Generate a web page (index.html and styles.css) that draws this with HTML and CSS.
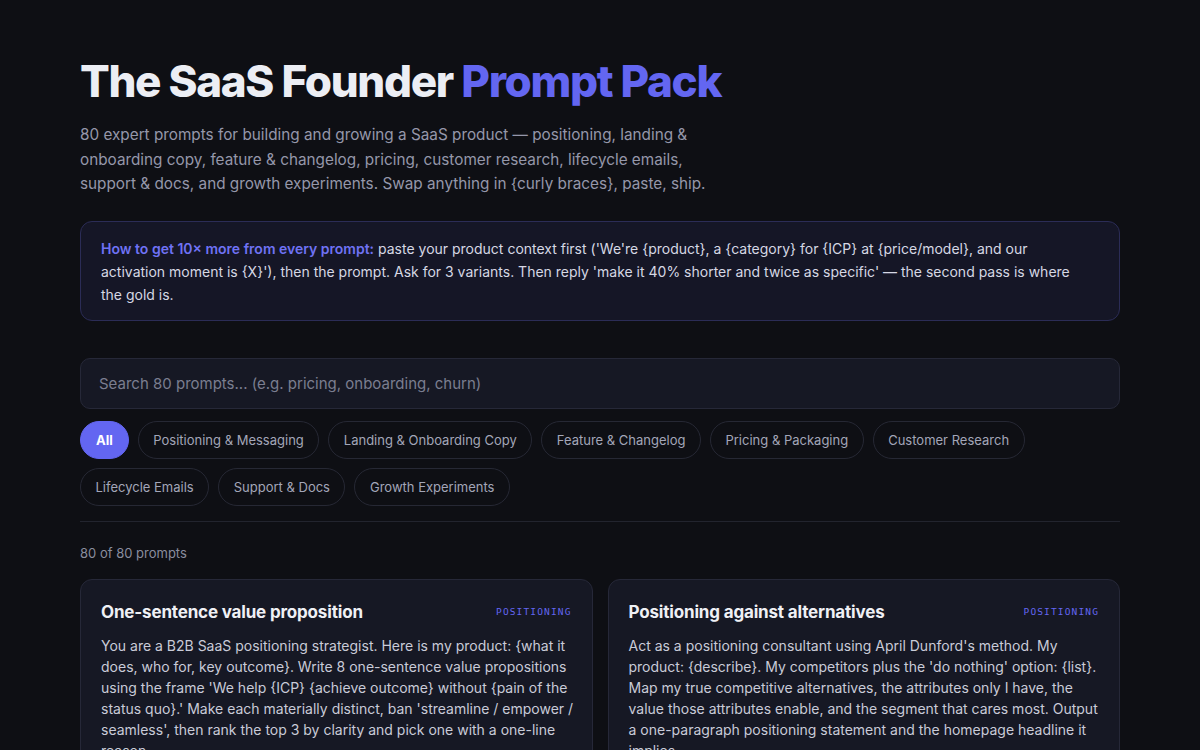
FILE: index.html
```html
<!DOCTYPE html>
<html lang="en">
<head>
  <meta charset="UTF-8">
  <meta name="viewport" content="width=device-width, initial-scale=1.0">
  <title>The SaaS Founder Prompt Pack</title>
  <link rel="stylesheet" href="styles.css">
</head>
<body>
  <main class="page">
    <header class="hero">
      <h1 class="hero-title">The SaaS Founder <span class="accent">Prompt Pack</span></h1>
      <p class="hero-sub">80 expert prompts for building and growing a SaaS product — positioning, landing &amp; onboarding copy, feature &amp; changelog, pricing, customer research, lifecycle emails, support &amp; docs, and growth experiments. Swap anything in {curly braces}, paste, ship.</p>
    </header>

    <div class="tip">
      <strong>How to get 10× more from every prompt:</strong> paste your product context first ('We're {product}, a {category} for {ICP} at {price/model}, and our activation moment is {X}'), then the prompt. Ask for 3 variants. Then reply 'make it 40% shorter and twice as specific' — the second pass is where the gold is.
    </div>

    <input type="text" class="search" id="search" placeholder="Search 80 prompts... (e.g. pricing, onboarding, churn)">

    <div class="filters" id="filters">
      <button class="chip active">All</button>
      <button class="chip">Positioning &amp; Messaging</button>
      <button class="chip">Landing &amp; Onboarding Copy</button>
      <button class="chip">Feature &amp; Changelog</button>
      <button class="chip">Pricing &amp; Packaging</button>
      <button class="chip">Customer Research</button>
      <button class="chip">Lifecycle Emails</button>
      <button class="chip">Support &amp; Docs</button>
      <button class="chip">Growth Experiments</button>
    </div>

    <div class="count" id="count">80 of 80 prompts</div>

    <section class="grid" id="grid">
      <article class="card">
        <div class="card-head">
          <h2 class="card-title">One-sentence value proposition</h2>
          <span class="card-tag">Positioning</span>
        </div>
        <p class="card-body">You are a B2B SaaS positioning strategist. Here is my product: {what it does, who for, key outcome}. Write 8 one-sentence value propositions using the frame 'We help {ICP} {achieve outcome} without {pain of the status quo}.' Make each materially distinct, ban 'streamline / empower / seamless', then rank the top 3 by clarity and pick one with a one-line reason.</p>
      </article>
      <article class="card">
        <div class="card-head">
          <h2 class="card-title">Positioning against alternatives</h2>
          <span class="card-tag">Positioning</span>
        </div>
        <p class="card-body">Act as a positioning consultant using April Dunford's method. My product: {describe}. My competitors plus the 'do nothing' option: {list}. Map my true competitive alternatives, the attributes only I have, the value those attributes enable, and the segment that cares most. Output a one-paragraph positioning statement and the homepage headline it implies.</p>
      </article>
    </section>
  </main>
</body>
</html>
```

FILE: styles.css
```css
* {
  margin: 0;
  padding: 0;
  box-sizing: border-box;
}

body {
  font-family: Inter, 'Noto Sans', sans-serif;
  background: #0e0f14;
  color: #d4d6e2;
  overflow: hidden;
}

.page {
  width: 1040px;
  margin: 0 auto;
  padding-top: 56px;
}

.hero-title {
  font-size: 44px;
  font-weight: 800;
  letter-spacing: -0.03em;
  line-height: 50px;
  color: #eceef4;
}

.accent {
  color: #6366f1;
}

.hero-sub {
  margin-top: 17px;
  max-width: 640px;
  font-size: 15.3px;
  line-height: 24.5px;
  color: #9597aa;
}

.tip {
  margin-top: 24px;
  padding: 15px 28px 14px 20px;
  background: #151626;
  border: 1px solid #2b2c56;
  border-radius: 12px;
  font-size: 14px;
  line-height: 23px;
  color: #d6d8e4;
}

.tip strong {
  color: #6f72f4;
  font-weight: 600;
}

.search {
  display: block;
  width: 100%;
  height: 51px;
  margin-top: 37px;
  padding: 0 18px;
  background: #161824;
  border: 1px solid #262838;
  border-radius: 10px;
  font-family: inherit;
  font-size: 15px;
  color: #d4d6e2;
  outline: none;
}

.search::placeholder {
  color: #7b7e90;
}

.filters {
  display: flex;
  flex-wrap: wrap;
  gap: 9px;
  margin-top: 12px;
  padding-bottom: 15px;
  border-bottom: 1px solid #22242e;
}

.chip {
  height: 38px;
  padding: 0 14.5px;
  background: transparent;
  border: 1px solid #262834;
  border-radius: 19px;
  font-family: inherit;
  font-size: 13px;
  color: #a3a6b8;
  cursor: pointer;
}

.chip.active {
  padding: 0 15px;
  background: #6366f1;
  border-color: #6366f1;
  color: #fff;
  font-weight: 700;
}

.count {
  margin-top: 23px;
  font-size: 13px;
  color: #8a8d9e;
}

.grid {
  display: grid;
  grid-template-columns: 1fr 1fr;
  gap: 15px;
  margin-top: 18px;
}

.card {
  padding: 22px 16px 22px 20px;
  background: #161824;
  border: 1px solid #262838;
  border-radius: 12px;
}

.card-head {
  display: flex;
  align-items: center;
  justify-content: space-between;
  gap: 12px;
  padding-right: 4px;
}

.card-title {
  font-size: 17px;
  font-weight: 700;
  letter-spacing: -0.01em;
  color: #eff0f5;
}

.card-tag {
  font-family: 'DejaVu Sans Mono', monospace;
  font-size: 9.5px;
  letter-spacing: 0.12em;
  text-transform: uppercase;
  color: #6366f1;
}

.card-body {
  margin-top: 13px;
  font-size: 14px;
  line-height: 21px;
  color: #c9cbd8;
}
```
